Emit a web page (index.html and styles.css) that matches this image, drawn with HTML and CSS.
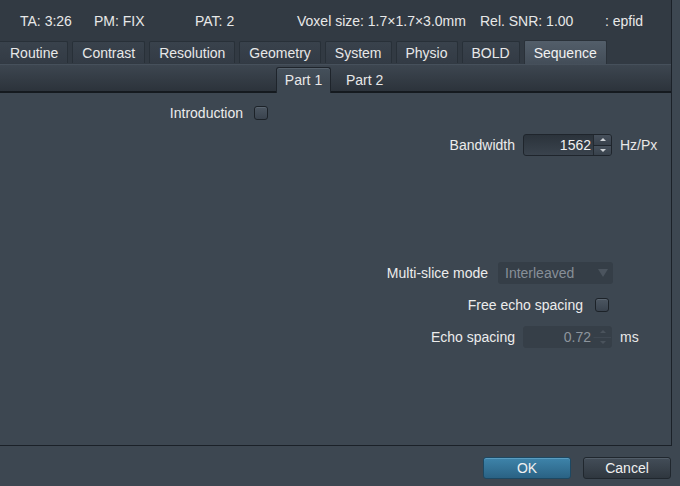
FILE: index.html
```html
<!DOCTYPE html>
<html>
<head>
<meta charset="utf-8">
<link rel="stylesheet" href="styles.css">
</head>
<body>
<div class="frame">
  <div class="header">
    <span class="h h-ta">TA: 3:26</span>
    <span class="h h-pm">PM: FIX</span>
    <span class="h h-pat">PAT: 2</span>
    <span class="h h-vox">Voxel size: 1.7×1.7×3.0mm</span>
    <span class="h h-snr">Rel. SNR: 1.00</span>
    <span class="h">: epfid</span>
  </div>
  <div class="tabs">
    <div class="tab first">Routine</div>
    <div class="tab">Contrast</div>
    <div class="tab">Resolution</div>
    <div class="tab">Geometry</div>
    <div class="tab">System</div>
    <div class="tab">Physio</div>
    <div class="tab">BOLD</div>
    <div class="tab active">Sequence</div>
  </div>
  <div class="subtabs">
    <div class="subtab active">Part 1</div>
    <div class="subtab">Part 2</div>
  </div>
  <div class="content">
    <div class="row r-intro">
      <span class="label">Introduction</span>
      <span class="check gap11"></span>
    </div>
    <div class="row r-bw">
      <span class="label">Bandwidth</span>
      <div class="spin">
        <span class="val">1562</span>
        <div class="arrows">
          <span class="arr up"></span>
          <span class="arr down"></span>
        </div>
      </div>
      <span class="unit">Hz/Px</span>
    </div>
    <div class="row r-msm">
      <span class="label">Multi-slice mode</span>
      <div class="select">
        <span>Interleaved</span>
        <span class="tri"></span>
      </div>
    </div>
    <div class="row r-fes">
      <span class="label">Free echo spacing</span>
      <span class="check gap12"></span>
    </div>
    <div class="row r-es">
      <span class="label">Echo spacing</span>
      <div class="spin disabled">
        <span class="val">0.72</span>
        <div class="arrows">
          <span class="arr up"></span>
          <span class="arr down"></span>
        </div>
      </div>
      <span class="unit">ms</span>
    </div>
  </div>
</div>
<div class="footer">
  <button class="btn ok">OK</button>
  <button class="btn">Cancel</button>
</div>
</body>
</html>
```

FILE: styles.css
```css
html, body {
  margin: 0;
  padding: 0;
}
body {
  width: 680px;
  height: 486px;
  overflow: hidden;
  background: #3d4751;
  font-family: "Liberation Sans", Arial, sans-serif;
  font-size: 14px;
  color: #e8e8e8;
}
.frame {
  width: 671px;
  height: 445px;
  border-right: 1px solid #1b2128;
  border-bottom: 1px solid #1b2128;
  display: flex;
  flex-direction: column;
  background: #3d4751;
}
.header {
  height: 40px;
  background: #323a43;
  display: flex;
  align-items: center;
  padding-left: 20px;
  box-sizing: border-box;
  padding-top: 1px;
}
.h { white-space: nowrap; }
.h-ta { width: 74px; }
.h-pm { width: 101px; }
.h-pat { width: 102px; }
.h-vox { width: 183px; }
.h-snr { width: 125px; }

.tabs {
  height: 24px;
  background: #323a43;
  display: flex;
  align-items: flex-end;
  gap: 4px;
  overflow: hidden;
}
.tab {
  height: 22px;
  box-sizing: border-box;
  margin-bottom: 1px;
  padding: 0 9px;
  border: 1px solid #283038;
  border-bottom: none;
  border-radius: 2px 2px 0 0;
  background: linear-gradient(#39424c, #333b45);
  display: flex;
  align-items: center;
  white-space: nowrap;
}
.tab.first {
  margin-left: -2px;
  padding-left: 11px;
}
.tab.active {
  height: 24px;
  margin-bottom: 0;
  background: linear-gradient(#535e6a, #434d58);
  border-color: #2a3139;
  color: #f2f2f2;
}

.subtabs {
  height: 29px;
  box-sizing: border-box;
  border-top: 1px solid #46505b;
  border-bottom: 2px solid #151a1f;
  background: linear-gradient(#3d4650, #2c333b);
  display: flex;
  align-items: flex-end;
  padding-left: 276px;
}
.subtab {
  height: 25px;
  box-sizing: border-box;
  padding: 0 10px;
  display: flex;
  align-items: center;
  margin-bottom: -2px;
  white-space: nowrap;
  padding-bottom: 2px;
}
.subtab.active {
  width: 55px;
  padding: 0;
  justify-content: center;
  background: linear-gradient(#45505b, #3d4751 60%);
  border: 1px solid #1e242b;
  border-bottom: none;
  border-radius: 3px 3px 0 0;
  box-shadow: inset 0 1px 0 #56616c;
  margin-bottom: -2px;
  height: 26px;
  padding-bottom: 2px;
}
.subtab:not(.active) {
  padding-left: 15px;
}

.content {
  flex: 1;
  display: flex;
  flex-direction: column;
  padding-top: 8px;
  gap: 8px;
}
.row {
  height: 24px;
  display: flex;
  align-items: center;
  justify-content: flex-end;
  white-space: nowrap;
}
.r-intro { padding-right: 403px; }
.r-bw { padding-right: 11px; }
.r-msm { padding-right: 58px; margin-top: 96px; }
.r-fes { padding-right: 62px; }
.r-es { padding-right: 11px; }

.label { color: #ececec; }
.check {
  width: 14px;
  height: 14px;
  box-sizing: border-box;
  border: 1px solid #1c2228;
  border-radius: 3px;
  background: linear-gradient(#4c5661, #3a434e);
  box-shadow: inset 0 1px 0 #5a6570;
}
.gap11 { margin-left: 11px; }
.gap12 { margin-left: 12px; }

.spin {
  margin-left: 8px;
  width: 89px;
  height: 22px;
  box-sizing: border-box;
  border: 1px solid #1f252c;
  border-radius: 3px;
  background: linear-gradient(#2b333b, #3a434d);
  display: flex;
  align-items: stretch;
}
.spin .val {
  flex: 1;
  text-align: right;
  padding-right: 2px;
  line-height: 20px;
  color: #f0f0f0;
}
.arrows {
  width: 18px;
  display: flex;
  flex-direction: column;
}
.arr {
  flex: 1;
  position: relative;
  background: linear-gradient(#46505b, #38414b);
  border-left: 1px solid #232a31;
}
.arr.up {
  border-bottom: 1px solid #1f252c;
  border-top-right-radius: 2px;
}
.arr.down {
  border-bottom-right-radius: 2px;
}
.arr::after {
  content: "";
  position: absolute;
  left: 6px;
  width: 5px;
  height: 0;
}
.arr.up::after {
  top: 3px;
  border-left: 3px solid transparent;
  border-right: 3px solid transparent;
  border-bottom: 3px solid #cfd3d7;
  width: 0;
}
.arr.down::after {
  top: 3px;
  border-left: 3px solid transparent;
  border-right: 3px solid transparent;
  border-top: 3px solid #cfd3d7;
  width: 0;
}
.spin.disabled {
  background: #363f48;
  border-color: #363f48;
}
.spin.disabled .val { color: #8d959d; }
.spin.disabled .arr {
  background: #363f48;
  border-left-color: #363f48;
}
.spin.disabled .arr.up { border-bottom-color: #3f4852; }
.spin.disabled .arr::after { border-top-color: transparent; border-bottom-color: transparent; }
.spin.disabled .arr.up::after { border-bottom-color: #4a535c; }
.spin.disabled .arr.down::after { border-top-color: #4a535c; }

.unit {
  margin-left: 8px;
  width: 40px;
}

.select {
  margin-left: 10px;
  width: 115px;
  height: 22px;
  box-sizing: border-box;
  border-radius: 3px;
  background: #353e47;
  color: #878f98;
  display: flex;
  align-items: center;
  justify-content: space-between;
  padding: 0 5px 0 7px;
}
.tri {
  width: 0;
  height: 0;
  border-left: 5px solid transparent;
  border-right: 5px solid transparent;
  border-top: 8px solid #4b545e;
}

.footer {
  display: flex;
  justify-content: flex-end;
  gap: 12px;
  padding: 11px 9px 0 0;
}
.btn {
  width: 88px;
  height: 22px;
  box-sizing: border-box;
  border-radius: 3px;
  font-family: "Liberation Sans", Arial, sans-serif;
  font-size: 14px;
  color: #f0f0f0;
  border: 1px solid #20272e;
  background: linear-gradient(#434d58, #2f373f);
  box-shadow: inset 0 1px 0 #535e69;
  padding: 0;
}
.btn.ok {
  border-color: #1d4862;
  background: linear-gradient(#3e84aa, #2a6284);
  box-shadow: inset 0 1px 0 #5a9cc0;
}
```
